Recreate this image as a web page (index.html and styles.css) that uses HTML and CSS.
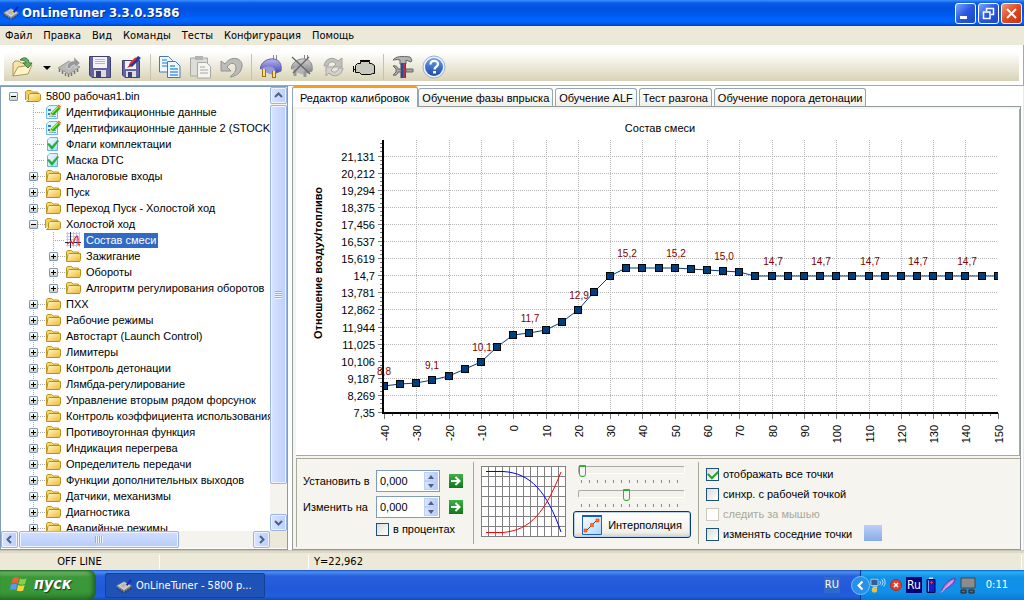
FILE: index.html
```html
<!DOCTYPE html>
<html lang="ru">
<head>
<meta charset="utf-8">
<title>OnLineTuner 3.3.0.3586</title>
<link rel="stylesheet" href="styles.css">
</head>
<body>
<svg class="defs" aria-hidden="true">
  <defs>
    <linearGradient id="gFolder" x1="0" y1="0" x2="1" y2="1"><stop offset="0" stop-color="#fffbc8"/><stop offset="1" stop-color="#eeb836"/></linearGradient>
    <linearGradient id="gSky" x1="0" y1="0" x2="1" y2="1"><stop offset="0" stop-color="#fff"/><stop offset="1" stop-color="#a8d4f8"/></linearGradient>
    <linearGradient id="gHelp" x1="0" y1="0" x2="0" y2="1"><stop offset="0" stop-color="#6a9be8"/><stop offset="1" stop-color="#1c4aa8"/></linearGradient>
    <linearGradient id="gPlug" x1="0" y1="0" x2="0" y2="1"><stop offset="0" stop-color="#b8b8f4"/><stop offset="1" stop-color="#4848a8"/></linearGradient>
    <linearGradient id="gGray" x1="0" y1="0" x2="0" y2="1"><stop offset="0" stop-color="#d4d4d4"/><stop offset="1" stop-color="#808080"/></linearGradient>
    <symbol id="folder" viewBox="0 0 16 16"><path d="M1.500 13V4l1-1.500h4l1.500 1.500h5.500V6" fill="#f4d878" stroke="#c09828"/><path d="M1.500 13.500 3 6.500 4 5.500h11.500v6l-1 2z" fill="url(#gFolder)" stroke="#b89018"/></symbol>
    <symbol id="folderopen" viewBox="0 0 16 16"><path d="M.5 12V4l1.500-1.500h4L7.500 4h5l1 1.500v2" fill="#f4d060" stroke="#c09828"/><path d="M1.500 13.500h12l2-1.500V6.500l-1-1H5L3.500 7v5z" fill="url(#gFolder)" stroke="#b89018"/></symbol>
    <symbol id="edit" viewBox="0 0 16 16"><path d="M1.500 4 4 1.500h8.500v13h-11z" fill="#e4f4ff" stroke="#68b8f0"/><path d="M3 5h3v2H3zM3 9h2v2H3z" fill="#3878c8"/><path d="M8 10.500h3M4 12.500h7" stroke="#68a8e0"/><path d="m5 12.500 1-4 6.500-6.500 3 2.500-6.500 6.500z" fill="#28b010"/><path d="m6.500 8.500 6-6 1 1-6 6z" fill="#a0f060"/><path d="m4.500 13 1.200-4 2.800 2.800z" fill="#f8c890"/><path d="m12.500 2 1.200-1.500 2.300 2L15 4.200z" fill="#f07820"/></symbol>
    <symbol id="check" viewBox="0 0 16 16"><path d="M2.500 4 5 1.500h7.500v13h-10z" fill="url(#gSky)" stroke="#60b4f0"/><path d="m2 8 2-1 3 3 5.500-6 1.500 1L7 14z" fill="#20b038"/></symbol>
    <symbol id="graph" viewBox="0 0 16 16"><path d="M1 1.500h14M1 4.500h14M1 7.500h14M1 13.500h14M2.500 0v15M8.500 0v15M11.500 0v15M14.500 0v15" stroke="#c4c4fa"/><path d="M0 10.500h16M5.500 0v16" stroke="#202058"/><path d="m2 12 3-2 1-1 2 3 2-6 2-2 1 2v6l2 1" fill="none" stroke="#f03018" stroke-width="1.300"/></symbol>
    <symbol id="chip" viewBox="0 0 20 16"><path d="m1 7 9-5 9 5-9 6z" fill="#d0d0d0" stroke="#888"/><path d="m1 7 9 6v2L1 9zM10 13l9-6v2l-9 6z" fill="#888"/><path d="M2 9v3M5 11v3M8 13v3M12 13v3M15 11v3M18 9v3" stroke="#333"/><path d="m5 7 5-3 5 3-5 3z" fill="#b4b4b4"/></symbol>
  </defs>
</svg>

<header class="titlebar">
  <svg class="appicon" viewBox="0 0 18 16"><use href="#chip" width="17" height="15" y="1"/><path d="m10 7 5-6 2 1-5 6z" fill="#1828c8"/><path d="m9 9 1-3 2 2z" fill="#e8d820"/></svg>
  <h1>OnLineTuner 3.3.0.3586</h1>
  <div class="winbtns">
    <button type="button" aria-label="Свернуть"><svg viewBox="0 0 17 17"><path d="M3 11h7v3H3z" fill="#fff"/></svg></button>
    <button type="button" aria-label="Восстановить"><svg viewBox="0 0 17 17"><path d="M6.500 6V3.500h7v6H11M6 3.500h8" fill="none" stroke="#fff" stroke-width="1.500"/><path d="M3.500 7h6.500v6.500H3.500z" fill="none" stroke="#fff" stroke-width="1.500"/></svg></button>
    <button type="button" class="close" aria-label="Закрыть"><svg viewBox="0 0 17 17"><path d="m4 4 9 9m0-9-9 9" stroke="#fff" stroke-width="2"/></svg></button>
  </div>
</header>

<nav class="menu">
  <button type="button">Файл</button><button type="button">Правка</button><button type="button">Вид</button><button type="button">Команды</button><button type="button">Тесты</button><button type="button">Конфигурация</button><button type="button">Помощь</button>
</nav>

<div class="toolwrap">
<div class="toolbar">
  <button type="button" aria-label="Открыть"><svg viewBox="0 0 24 24"><path d="M2 21V8l2-2h4l2 2h6v4" fill="#f4e4a8" stroke="#b09858"/><path d="m2 21 5-9 14-2-4 9z" fill="#fff4c8" stroke="#b09858"/><path d="M9 5c4-4 9-2 9 3h3l-4 5-5-5h3c0-2-3-3-6-3z" fill="#68b068" stroke="#387838"/></svg></button>
  <button type="button" class="drop" aria-label="Список"><svg viewBox="0 0 8 24"><path d="M0 11h8l-4 4z" fill="#000"/></svg></button>
  <button type="button" aria-label="Прочитать"><svg viewBox="0 0 24 24"><path d="m1 13 11-7 11 6-11 7z" fill="#b8b8b8" stroke="#999"/><path d="M2.500 14v3M5.500 16v3M8.500 18v3M11.500 19v3M14.500 18v3M17.500 16v3M20.500 14v3" stroke="#777" stroke-width="1.500"/><path d="M10 13c0-5 3-7 7-7V2l6 6-5 5v-3c-3 0-4 1-5 4z" fill="#989898" stroke="#e4e4e4" stroke-width=".7"/></svg></button>
  <button type="button" aria-label="Сохранить"><svg viewBox="0 0 24 24"><path d="M1.500 1.500h20l1 1v20H4l-2.500-2.500z" fill="#6464a0" stroke="#404078"/><path d="M5 2h14v11H5z" fill="#f4f4f8"/><path d="M7 4.500h10M7 6.500h10M7 8.500h10" stroke="#b8b8c4"/><path d="M6 15h12v7H6z" fill="#ddd"/><path d="M8 16h5v6H8z" fill="#404078"/></svg></button>
  <button type="button" aria-label="Сохранить как"><svg viewBox="0 0 24 24"><path d="M3.500 5.500h17v17H6l-2.500-2.500z" fill="#6464a0" stroke="#404078"/><path d="M6 6h11v8H6z" fill="#f4f4f8"/><path d="M7 16h10v6H7z" fill="#ddd"/><path d="M9 17h4v5H9z" fill="#404078"/><path d="m8 13 3-4 2 2z" fill="#e02020"/><path d="m10 10 9-9 3 2-9 9z" fill="#2038a0"/><path d="m11 9 6-6" stroke="#e03030" stroke-width="2"/></svg></button>
  <span class="sep"></span>
  <button type="button" aria-label="Копировать"><svg viewBox="0 0 24 24"><path d="M1.500 1.500h9l4 4V17h-13z" fill="#f0f6ff" stroke="#4878b8"/><path d="M4 5h5M4 8h7M4 11h7" stroke="#58a8e0" stroke-width="1.500"/><path d="M9.500 6.500h8l4.500 4.500v11.500H9.500z" fill="#f0f6ff" stroke="#4878b8"/><path d="M12 11h5M12 14h8M12 17h8M12 20h8" stroke="#4898d8" stroke-width="1.500"/></svg></button>
  <button type="button" aria-label="Вставить"><svg viewBox="0 0 24 24"><path d="M1.500 3h17v18h-17z" fill="#dcdcd8" stroke="#a8a8a4"/><path d="M6 1h8v4H6z" fill="#b4b4b4"/><path d="M8.500 7.500h9l4 4V23h-13z" fill="#f4f4f0" stroke="#a8a8a4"/><path d="M11 12h5M11 15h8M11 18h8" stroke="#c0c0bc" stroke-width="1.500"/></svg></button>
  <button type="button" aria-label="Отменить"><svg viewBox="0 0 24 24"><path d="M1 6v10h10l-4-4c4-6 9-4 9 1 0 3-2 6-6 9 8-1 12-6 12-12C22 3 11 0 5 9z" fill="#bcbcb8" stroke="#90908c"/></svg></button>
  <span class="sep"></span>
  <button type="button" aria-label="Подключить"><svg viewBox="0 0 24 24"><path d="M14.500 0v7M17.500 0v5" stroke="#888"/><path d="M1.500 14C1 8 8 3 15 4c6 1 8 6 7 12l-5 2c-1-6-8-8-15.500-4z" fill="url(#gPlug)" stroke="#6060b0"/><path d="M2 14c5-4 14-4 15 4-4 3-8 1-15-4z" fill="#9898dc"/><path d="M5 14v8M15 16v7" stroke="#a07010" stroke-width="4"/><path d="M5 14v7M15 16v6" stroke="#ffe078" stroke-width="2"/></svg></button>
  <button type="button" aria-label="Отключить"><svg viewBox="0 0 24 24"><path d="M14.500 0v7M17.500 0v5" stroke="#888"/><path d="M1.500 14C1 8 8 3 15 4c6 1 8 6 7 12l-5 2c-1-6-8-8-15.500-4z" fill="url(#gGray)" stroke="#888"/><path d="M2 14c5-4 14-4 15 4-4 3-8 1-15-4z" fill="#b4b4b4"/><path d="M5 15v6M15 16v6" stroke="#999" stroke-width="3"/><path d="m2 2 18 17M19 2 3 18" stroke="#666" stroke-width="1.300"/></svg></button>
  <button type="button" aria-label="Обновить"><svg viewBox="0 0 24 24"><path d="M3 11c1-8 9-10 14-5l4-3v9h-9l3-3c-4-4-7-2-8 2z" fill="#c0c0bc" stroke="#a4a4a0"/><path d="M22 13c-1 8-9 10-14 5l-3 3v-9h8l-3 3c3 4 6 2 8-2z" fill="#d0d0cc" stroke="#a4a4a0"/></svg></button>
  <button type="button" aria-label="Двигатель"><svg viewBox="0 0 24 24"><path d="M5.500 8.500h3v-2h9v2h2l3 2v8h-2l-2 1h-9l-2-2h-4v-7z" fill="#c8c8bc" stroke="#000"/><path d="M1.500 11v6M1 14.500h3M8 5.500h10" stroke="#000"/></svg></button>
  <span class="sep"></span>
  <button type="button" aria-label="Настройки"><svg viewBox="0 0 24 24"><path d="M2 5c3-4 9-4 17-3l2 3-1 2-5-2v4H9V5C6 4 4 5 2 5z" fill="#b4b4b4" stroke="#666"/><path d="M10 8h5v15h-5z" fill="#2848b0"/><path d="M12 8h2v15h-2z" fill="#c03038"/><path d="M10 9v14" stroke="#444"/><path d="M2 11c4-1 5 2 5 3h3v3H7c0 2-2 4-5 3l3-3v-3zM15 14h7v3h-7z" fill="#a8a8a8" stroke="#666"/></svg></button>
  <button type="button" aria-label="Справка"><svg viewBox="0 0 24 24"><circle cx="12" cy="12" r="11" fill="#eef4ff" stroke="#98b0d8"/><circle cx="12" cy="12" r="9" fill="url(#gHelp)"/><path d="M8.500 9.500c0-5 7.500-4.500 7.500-.5 0 3-3.500 2.500-3.500 5.500" fill="none" stroke="#fff" stroke-width="2.300"/><path d="M11 16h3v2.500h-3z" fill="#fff"/></svg></button>
</div>
</div>

<main class="work">
  <aside class="treebox">
    <div class="tree" id="tree"></div>
    <div class="vbar">
      <button type="button" class="sb" aria-label="Вверх"><svg viewBox="0 0 15 15"><path d="m4 9 3.500-3.500L11 9" class="chev"/></svg></button>
      <div class="thumb vthumb"><i></i></div>
      <span class="rest"></span>
      <button type="button" class="sb" aria-label="Вниз"><svg viewBox="0 0 15 15"><path d="m4 6 3.500 3.500L11 6" class="chev"/></svg></button>
    </div>
    <div class="hbar">
      <button type="button" class="sb" aria-label="Влево"><svg viewBox="0 0 15 15"><path d="M9 4 5.500 7.500 9 11" class="chev"/></svg></button>
      <div class="thumb hthumb"><i></i></div>
      <span class="rest"></span>
      <button type="button" class="sb" aria-label="Вправо"><svg viewBox="0 0 15 15"><path d="M6 4l3.500 3.500L6 11" class="chev"/></svg></button>
    </div>
    <span class="corner"></span>
  </aside>

  <section class="right">
    <div class="tabs" role="tablist">
      <button type="button" role="tab" class="tab active" aria-selected="true">Редактор калибровок</button>
      <button type="button" role="tab" class="tab">Обучение фазы впрыска</button>
      <button type="button" role="tab" class="tab">Обучение ALF</button>
      <button type="button" role="tab" class="tab">Тест разгона</button>
      <button type="button" role="tab" class="tab">Обучение порога детонации</button>
    </div>
    <div class="page">
      <div class="chart"><svg id="chart" viewBox="0 1 723 346" role="img" aria-label="Состав смеси"></svg></div>
      <div class="controls">
        <div class="grp values">
          <label for="setv">Установить в</label>
          <div class="spin"><input id="setv" type="text" value="0,000"><span class="ud"><button type="button" aria-label="Больше"></button><button type="button" class="dn" aria-label="Меньше"></button></span></div>
          <button type="button" class="go" aria-label="Установить"><svg viewBox="0 0 14 14"><path d="M2 7h8M6.500 3 10.500 7l-4 4" fill="none" stroke="#fff" stroke-width="2"/></svg></button>
          <label for="chgv">Изменить на</label>
          <div class="spin"><input id="chgv" type="text" value="0,000"><span class="ud"><button type="button" aria-label="Больше"></button><button type="button" class="dn" aria-label="Меньше"></button></span></div>
          <button type="button" class="go" aria-label="Изменить"><svg viewBox="0 0 14 14"><path d="M2 7h8M6.500 3 10.500 7l-4 4" fill="none" stroke="#fff" stroke-width="2"/></svg></button>
          <label class="cb pct"><input type="checkbox">в процентах</label>
        </div>
        <div class="grp interp">
          <svg class="curves" id="curves" viewBox="0 0 85 71" aria-hidden="true"></svg>
          <div class="sliders">
            <input type="range" aria-label="Левая граница" min="0" max="100" value="0">
            <input type="range" aria-label="Правая граница" min="0" max="100" value="45">
            <button type="button" class="xpbtn"><svg viewBox="0 0 20 20"><path d="M.5.500h19v19H.5z" fill="url(#gSky)" stroke="#2060c0"/><path d="M0 0h20v2H0z" fill="#1858c8"/><path d="M4 16 10 10l6-6" stroke="#444"/><path d="M2 14h3v3H2zM8.500 8.500h3v3h-3zM14 4h3v3h-3z" fill="#ff7020" stroke="#e04800" stroke-width=".6"/></svg>Интерполяция</button>
          </div>
        </div>
        <div class="grp opts">
          <label class="cb"><input type="checkbox" checked>отображать все точки</label>
          <label class="cb"><input type="checkbox">синхр. с рабочей точкой</label>
          <label class="cb off"><input type="checkbox" disabled>следить за мышью</label>
          <div class="optrow"><label class="cb"><input type="checkbox">изменять соседние точки</label><span class="swatch"></span></div>
        </div>
      </div>
    </div>
  </section>
</main>

<footer class="status"><span class="s1">OFF LINE</span><span class="s2"></span><span class="s3">Y=22,962</span></footer>

<div class="taskbar">
  <button type="button" class="start"><svg viewBox="0 0 18 18"><path d="M3 3c2-1.500 4-1 6 0L7.500 8.500C5.500 7.500 3.500 7.500 1.500 8.500z" fill="#f06038"/><path d="M10 3.500c2 1 4 1 6.500 0L15 9c-2 1-4.500 1-6.500 0z" fill="#88d048"/><path d="M1.200 9.500c2-1 4-1 6 0L5.700 15c-2-1-4-1-6 0z" fill="#5898f8"/><path d="M8.200 10c2 1 4.500 1 6.500 0l-1.500 5.500c-2 1-4.500 1-6.500 0z" fill="#f8d040"/></svg>пуск</button>
  <button type="button" class="task"><svg class="appicon" viewBox="0 0 18 16"><use href="#chip" width="17" height="15" y="1"/><path d="m10 7 5-6 2 1-5 6z" fill="#1828c8"/><path d="m9 9 1-3 2 2z" fill="#e8d820"/></svg>OnLineTuner - 5800 р...</button>
  <span class="lang">RU</span>
  <div class="tray">
    <svg class="collapse" viewBox="0 0 19 19"><circle cx="9.500" cy="9.500" r="9" fill="#2890e8" stroke="#70c0f8"/><path d="M11.500 5.500 7.500 9.500l4 4" fill="none" stroke="#fff" stroke-width="2"/></svg>
    <svg viewBox="0 0 18 18"><path d="M1 2h8v7H1z" fill="#306090" stroke="#bcd"/><path d="M3 10h5v2H3z" fill="#ccc"/><circle cx="5" cy="14" r="3" fill="#f0c040"/><path d="M11 4c1 1 1 3 0 4M13 2c2 2 2 5 0 7M15.500 1c2 3 2 6 0 9" fill="none" stroke="#d8ecff"/></svg>
    <svg class="err" viewBox="0 0 12 12"><circle cx="6" cy="6" r="5.500" fill="#e04030" stroke="#a83028"/><path d="m4 4 4 4m0-4L4 8" stroke="#fff" stroke-width="1.500"/></svg>
    <b class="ru">Ru</b>
    <svg class="bat" viewBox="0 0 10 16"><path d="M3 0h4v2H3z" fill="#ddd"/><path d="M1 2h8v13H1z" fill="#1020d0" stroke="#000040"/><path d="M2.500 3v11" stroke="#80a0ff"/><path d="M4 5h3M5.500 3.500v3" stroke="#f03030"/></svg>
    <svg viewBox="0 0 16 16"><path d="M1 15C3 8 8 2 15 1c0 5-6 9-11 11z" fill="#b878d8" stroke="#6838a0"/><path d="m1 15 12-12" stroke="#f0d8ff"/></svg>
    <svg viewBox="0 0 16 17"><path d="M1 1h14v10H1z" fill="#8c8c8c" stroke="#444"/><path d="M1 13h5v3H1zM9 13h5v3H9z" fill="#666" stroke="#222"/></svg>
    <time>0:11</time>
  </div>
</div>
<script src="app.js"></script>
</body>
</html>
```
FILE: styles.css
```css
* { box-sizing: border-box; }
html { height: 100%; }
body {
  margin: 0; height: 100vh; display: flex; flex-direction: column;
  background: #ece9d8; color: #000; overflow: hidden;
  font: 11px/14px "DejaVu Sans Condensed", "DejaVu Sans", sans-serif;
}
button, input { font: inherit; color: inherit; margin: 0; }
button { padding: 0; border: 0; background: none; white-space: nowrap; }
svg { display: block; }
.defs { position: absolute; width: 0; height: 0; }

.titlebar {
  height: 26px; flex: none; display: flex; align-items: center; padding: 0 2px 0 3px;
  background: linear-gradient(#3a90ff 0, #0a5ce8 3px, #0052e0 8px, #0058ec 14px, #0066ff 20px, #0060f8 23px, #0040b8 26px);
}
.appicon { width: 17px; height: 16px; flex: none; }
.titlebar h1 {
  margin: 0 auto 0 2px; color: #fff; text-shadow: 1px 1px #0a2a80;
  font: bold 13px/20px "DejaVu Sans Condensed", sans-serif;
}
.winbtns { display: flex; gap: 2px; }
.winbtns button {
  width: 21px; height: 21px; border: 1px solid #fff; border-radius: 3px;
  background: linear-gradient(135deg, #7aa4f8, #2858e0 50%, #1c48c8);
}
.winbtns .close { background: linear-gradient(135deg, #f09878, #e04820 50%, #c03810); }
.winbtns svg { width: 17px; height: 17px; margin: 1px; }

.menu { height: 19px; flex: none; display: flex; gap: 11px; padding: 0 5px; align-items: center; }

.toolwrap { flex: none; height: 41px; padding: 7px 4px 4px; background: #fff; border-bottom: 1px solid #aca899; border-right: 1px solid #aca899; }
.toolbar {
  height: 29px; display: flex; align-items: center; gap: 7px; padding-left: 7px;
  background: linear-gradient(#fff, #f0eee0 40%, #d8d4b8);
}
.toolbar svg { width: 24px; height: 24px; }
.toolbar .drop svg { width: 8px; }
.toolbar .drop { margin: 0 -1px 0 1px; }
.toolbar .sep { width: 1px; height: 26px; background: #c5c2b0; }

.work { flex: 1; min-height: 0; display: flex; background: #fff; }
.treebox {
  flex: none; width: 288px; display: grid; grid-template: minmax(0, 1fr) 17px / minmax(0, 1fr) 17px;
  border: 1px solid #7f9db9; background: #fff; padding-bottom: 1px;
}
.tree { overflow: hidden; padding-top: 1px; white-space: nowrap; font: 11px/16px "Liberation Sans", sans-serif; }
.tree ul { margin: 0; padding: 0; list-style: none; }
.tree ul ul { background: repeating-linear-gradient(#aaa 0 1px, transparent 1px 2px) 32px 0 / 1px 100% no-repeat; }
.tree ul ul ul { background-position: 52px 0; background-size: 1px calc(100% - 8px); }
.row { display: flex; align-items: center; height: 16px; padding-left: 8px; }
.l1 { padding-left: 28px; }
.l2 { padding-left: 48px; }
.tg {
  width: 9px; height: 9px; flex: none; border: 1px solid #7898b5; border-radius: 1px;
  background:
    linear-gradient(#000, #000) 1px 3px / 5px 1px no-repeat,
    linear-gradient(#000, #000) 3px 1px / 1px 5px no-repeat,
    linear-gradient(#fff, #d0cdc0);
}
.tg.open { background: linear-gradient(#000, #000) 1px 3px / 5px 1px no-repeat, linear-gradient(#fff, #d0cdc0); }
.dots { width: 7px; height: 1px; flex: none; background: repeating-linear-gradient(90deg, #aaa 0 1px, transparent 1px 2px); }
.leaf .dots { width: 12px; margin-left: 4px; }
.l0 .dots { background: none; }
.row svg { width: 16px; height: 16px; flex: none; margin-right: 3px; }
.row a { padding: 0 2px; line-height: 15px; color: inherit; text-decoration: none; }
.row a.sel { background: #316ac5; color: #fff; }

.vbar, .hbar { display: flex; background: #f4f3ee; gap: 1px; }
.vbar { flex-direction: column; }
.sb, .thumb { border: 1px solid #98b4e8; border-radius: 2px; background: linear-gradient(90deg, #d8e4ff, #bccffb); box-shadow: inset 0 0 0 1px #eef3ff; }
.sb { width: 17px; height: 17px; flex: none; }
.sb svg { width: 15px; height: 15px; }
.chev { fill: none; stroke: #4d6185; stroke-width: 2; }
.thumb { display: flex; align-items: center; justify-content: center; }
.vthumb { flex: 380; }
.vbar .rest { flex: 28; }
.hthumb { flex: 159; background: linear-gradient(#d0dfff, #b8ccfa); }
.hbar .rest { flex: 73; }
.vthumb i { width: 7px; height: 8px; background: repeating-linear-gradient(#8cb0f8 0 1px, #eef4ff 1px 2px); }
.hthumb i { width: 8px; height: 7px; background: repeating-linear-gradient(90deg, #8cb0f8 0 1px, #eef4ff 1px 2px); }
.corner { background: #ece9d8; }

.right { flex: 1; min-width: 0; display: flex; flex-direction: column; margin-left: 4px; padding-right: 2px; border-right: 1px solid #ece9d8; font-family: "Liberation Sans", sans-serif; }
.tabs { display: flex; align-items: flex-end; height: 20px; flex: none; gap: 2px; }
.tab {
  height: 18px; padding: 0 3px; border: 1px solid #91a7b4; border-bottom: 0; border-radius: 3px 3px 0 0;
  background: linear-gradient(#fff, #f0efe8);
}
.tab.active { height: 21px; padding: 0 8px 0 7px; margin: 0 -2px -1px 0; background: #fcfcfe; border-top: 2px solid #f0a020; position: relative; }
.page { flex: 1; min-height: 0; display: flex; flex-direction: column; padding: 2px 0 2px 3px; border: 1px solid #919b9c; background: #f5f4ee; }
.chart { background: #fff; border-right: 1px solid #aca899; border-bottom: 1px solid #aca899; }
.chart svg { width: 100%; height: auto; font-family: "Liberation Sans", sans-serif; font-size: 11px; }
.pl { font-size: 10px; fill: #800000; }
.vt { font-weight: bold; }
.controls { flex: 1; margin-top: 2px; border: 1px solid #aca899; border-right: 0; border-bottom: 0; display: flex; padding: 3px 0 3px 6px; }
.grp { display: flex; }
.values { display: grid; grid-template-columns: 69px 64px 19px; column-gap: 4px; grid-template-rows: 22px 22px 14px; row-gap: 4px; align-content: center; align-items: center; white-space: nowrap; padding-right: 10px; }
.values .go { width: 14px; height: 14px; margin-left: 5px; background: linear-gradient(#40b048, #107818); }
.values .pct { grid-column: 2 / 4; }
.spin { display: flex; height: 22px; border: 1px solid #7f9db9; background: #fff; padding: 1px; }
.spin input { width: 0; flex: 1; min-width: 0; border: 0; background: none; padding: 0 2px; outline: 0; }
.ud { width: 14px; display: flex; flex-direction: column; }
.ud button { flex: 1; background: linear-gradient(90deg, #d8e4ff, #b8ccf8); display: flex; align-items: center; justify-content: center; border: 1px solid #c0d0f4; }
.ud button::before { content: ""; border: 3px solid transparent; border-top: 0; border-bottom: 4px solid #4d6185; }
.ud .dn::before { border: 3px solid transparent; border-bottom: 0; border-top: 4px solid #4d6185; }
.cb { display: flex; align-items: center; gap: 4px; white-space: nowrap; height: 14px; }
.cb input { appearance: none; flex: none; width: 13px; height: 13px; border: 1px solid #1c5180; background: linear-gradient(135deg, #dcdcd7, #fff); }
.cb input:checked { background: linear-gradient(135deg, #dcdcd7, #fff); display: grid; place-items: center; }
.cb input:checked::before { content: ""; width: 8px; height: 5px; border: 2px solid #21a121; border-top: 0; border-right: 0; transform: rotate(-45deg); margin-bottom: 2px; }
.cb.off { color: #aca899; }
.cb.off input { border-color: #cac8bb; background: #fff; }
.interp { border-left: 1px solid #aca899; padding: 4px 7px; gap: 7px; }
.curves { width: 85px; height: 71px; }
.sliders { display: flex; flex-direction: column; width: 118px; }
.sliders input {
  appearance: none; height: 24px; width: 107px; margin: 0 5px;
  background: repeating-linear-gradient(90deg, #8f8b7c 0 1px, transparent 1px 8px) 3px 14px / 105px 3px no-repeat;
}
.sliders input::-webkit-slider-runnable-track { height: 8px; margin-top: -16px; border: 1px solid #aaa; border-right-color: #fff; border-bottom-color: #fff; border-radius: 2px; background: #f2f1ea; }
.sliders input::-webkit-slider-thumb {
  appearance: none; width: 7px; height: 12px; margin-top: -2px;
  border: 1px solid #6f8a7f; border-top: 2px solid #30b030; border-bottom-color: #30a030; border-radius: 1px 1px 4px 4px; background: #f4f4f0;
}
.xpbtn { display: flex; align-items: center; justify-content: center; gap: 6px; height: 27px; flex: none; margin-top: -3px; border: 1px solid #003c74; border-radius: 3px; background: linear-gradient(#fff, #f0f0ea 80%, #d6d0c5); box-shadow: inset 0 0 0 1px #bcd0f0; }
.xpbtn svg { width: 20px; height: 20px; }
.opts { border-left: 1px solid #aca899; flex-direction: column; gap: 6px; padding: 5px 7px 0; }
.optrow { display: flex; align-items: flex-start; gap: 12px; height: 14px; }
.swatch { width: 18px; height: 16px; margin-top: -2px; background: linear-gradient(#bcd0f8, #88ace8); }

.status { height: 20px; flex: none; display: flex; align-items: center; border-top: 1px solid #c8c5b4; box-shadow: inset 0 2px #dcd9c8; padding-top: 2px; }
.status span { height: 14px; border-right: 1px solid #fff; }
.s1 { width: 160px; text-align: center; }
.s2 { width: 149px; }
.s3 { flex: 1; padding-left: 5px; margin-right: 2px; }

.taskbar {
  height: 30px; flex: none; display: flex; align-items: center; color: #fff;
  background: linear-gradient(#1f50b8 0, #4a90f4 2px, #2860dc 6px, #2258d8 20px, #2060e0 26px, #1c48b0 30px);
}
.start {
  width: 96px; height: 30px; display: flex; align-items: center; gap: 6px; padding: 0 0 2px 10px; border-radius: 0 8px 8px 0;
  background: linear-gradient(#2a7028 0, #6cb868 2px, #3c9838 7px, #389838 22px, #2a7828 30px);
  box-shadow: inset -3px 0 4px #206020; font: italic bold 16px/24px "DejaVu Sans Condensed", sans-serif; text-shadow: 1px 1px 1px #1a3a18;
}
.start svg { width: 18px; height: 18px; overflow: visible; }
.task {
  width: 160px; height: 25px; display: flex; align-items: center; gap: 3px; padding: 0 0 0 10px; margin: 1px auto 0 9px;
  background: #1e52b7; border: 1px solid #163f98; border-radius: 2px;
}
.lang { background: #316ac5; padding: 1px 1px; margin-right: 20px; }
.tray {
  display: flex; align-items: center; align-self: stretch; gap: 4px; padding-right: 16px; border-left: 1px solid #0a3a98;
  background: linear-gradient(#0c60c0 0, #28b0f8 2px, #1290e8 7px, #1090e8 22px, #0c78d0 30px);
}
.tray svg { width: 16px; height: 17px; }
.tray .collapse { width: 19px; height: 19px; margin: 0 -4px 0 -10px; }
.tray .err { width: 12px; height: 12px; }
.tray .bat { width: 10px; }
.tray .ru { background: #000078; font-weight: normal; font-size: 12px; line-height: 16px; padding: 0 1px; }
.tray time { margin-left: 6px; }
```
FILE: app.js
```js
const nodes = [
  [0, "folderopen", "5800 рабочая1.bin", "-"],
  [1, "edit", "Идентификационные данные", ""],
  [1, "edit", "Идентификационные данные 2 (STOCK:", ""],
  [1, "check", "Флаги комплектации", ""],
  [1, "check", "Маска DTC", ""],
  [1, "folder", "Аналоговые входы", "+"],
  [1, "folder", "Пуск", "+"],
  [1, "folder", "Переход Пуск - Холостой ход", "+"],
  [1, "folderopen", "Холостой ход", "-"],
  [2, "graph", "Состав смеси", ""],
  [2, "folder", "Зажигание", "+"],
  [2, "folder", "Обороты", "+"],
  [2, "folder", "Алгоритм регулирования оборотов", "+"],
  [1, "folder", "ПХХ", "+"],
  [1, "folder", "Рабочие режимы", "+"],
  [1, "folder", "Автостарт (Launch Control)", "+"],
  [1, "folder", "Лимитеры", "+"],
  [1, "folder", "Контроль детонации", "+"],
  [1, "folder", "Лямбда-регулирование", "+"],
  [1, "folder", "Управление вторым рядом форсунок", "+"],
  [1, "folder", "Контроль коэффициента использования", "+"],
  [1, "folder", "Противоугонная функция", "+"],
  [1, "folder", "Индикация перегрева", "+"],
  [1, "folder", "Определитель передачи", "+"],
  [1, "folder", "Функции дополнительных выходов", "+"],
  [1, "folder", "Датчики, механизмы", "+"],
  [1, "folder", "Диагностика", "+"],
  [1, "folder", "Аварийные режимы", "+"]
];

let html = "", depth = -1;
for (const [level, icon, text, state] of nodes) {
  while (depth < level) { html += "<ul>"; depth++; }
  while (depth > level) { html += "</ul>"; depth--; }
  const toggle = state ? `<span class="tg${state === "-" ? " open" : ""}"></span>` : "";
  const sel = icon === "graph" ? ' class="sel"' : "";
  html += `<li class="row l${level}${state ? "" : " leaf"}">${toggle}<span class="dots"></span>` +
    `<svg><use href="#${icon}"/></svg><a href="#"${sel}>${text}</a></li>`;
}
document.getElementById("tree").innerHTML = html;

const left = 88, base = 305, stepX = 32.3, stepY = 17.1, right = 702, top0 = 32;
const px = t => Math.round(left + (t + 40) / 10 * stepX);
const line = (x1, y1, x2, y2, attrs) => `<line x1="${x1}" y1="${y1}" x2="${x2}" y2="${y2}" ${attrs}/>`;
const yLabels = ["7,35", "8,269", "9,187", "10,106", "11,025", "11,944", "12,862", "13,781", "14,7",
  "15,619", "16,537", "17,456", "18,375", "19,294", "20,212", "21,131"];
const dash = 'stroke="#b4b4b4" stroke-dasharray="1 1"';
let out = "";

yLabels.forEach((label, i) => {
  const y = Math.round(base - i * stepY) - 0.5;
  if (i) out += line(left, y, right, y, dash);
  out += line(82, y, 87, y, 'stroke="#777"');
  for (let k = 1; k < 4; k++) {
    const m = Math.round(base - (i + k / 4) * stepY) - 0.5;
    if (m > top0) out += line(84, m, 87, m, 'stroke="#777"');
  }
  out += `<text x="79" y="${y + 4.5}" text-anchor="end">${label}</text>`;
});
for (let t = -40; t <= 150; t += 10) {
  const x = px(t) + 0.5;
  if (t > -40 && t < 150) out += line(x, top0, x, base, dash);
  out += line(x, base, x, base + 6, 'stroke="#777"');
  for (let k = 1; k < 4 && t < 150; k++) {
    const m = px(t + k * 2.5) + 0.5;
    out += line(m, base, m, base + 3, 'stroke="#777"');
  }
  out += `<text transform="translate(${x + 4} 317) rotate(-90)" text-anchor="end">${t}</text>`;
}
out += line(87, top0, 87, base + 1, 'stroke="#000" stroke-width="2"');
out += line(87, base, right, base, 'stroke="#000" stroke-width="2"');

const ys = [278, 276, 275, 272, 268, 261, 254, 239, 227, 225, 222, 214, 202, 184, 168, 160, 160, 160, 160, 161, 162, 163, 164];
while (ys.length < 39) ys.push(168);
const pts = ys.map((y, i) => [px(-40 + i * 5), y]);
out += `<clipPath id="plot"><path d="M88 0H702V347H88z"/></clipPath><g clip-path="url(#plot)">`;
out += `<polyline points="${pts.map(p => p.join()).join(" ")}" fill="none" stroke="#003f7f"/>`;
for (const [x, y] of pts) out += `<rect x="${x - 3.5}" y="${y - 3.5}" width="7" height="7" fill="#003f7f" stroke="#000"/>`;
out += "</g>";
[["8,8", 88, 267], ["9,1", 136, 261], ["10,1", 186, 243], ["11,7", 234, 214], ["12,9", 283, 191], ["15,2", 331, 149],
 ["15,2", 380, 149], ["15,0", 428, 152], ["14,7", 477, 157], ["14,7", 525, 157], ["14,7", 574, 157], ["14,7", 622, 157], ["14,7", 671, 157]]
  .forEach(([s, x, y]) => { out += `<text class="pl" x="${x}" y="${y}" text-anchor="middle">${s}</text>`; });
out += '<text x="364" y="24" text-anchor="middle">Состав смеси</text>';
out += '<text class="vt" transform="translate(26 155) rotate(-90)" text-anchor="middle">Отношение воздух/топливо</text>';
document.getElementById("chart").innerHTML = out;

let grid = '<rect x=".5" y=".5" width="84" height="70" fill="#fff"/>';
for (let i = 0; i <= 12; i++) grid += line(i * 7 + 0.5, 0, i * 7 + 0.5, 71, 'stroke="#808080"');
for (let i = 0; i <= 7; i++) grid += line(0, i * 10 + 0.5, 85, i * 10 + 0.5, 'stroke="#808080"');
grid += '<path d="M5 5.500H22C50 7 66 26 80 66" fill="none" stroke="#00f"/><path d="M5 66.500H22C50 64 64 46 80 6" fill="none" stroke="#f00"/>';
document.getElementById("curves").innerHTML = grid;
```
